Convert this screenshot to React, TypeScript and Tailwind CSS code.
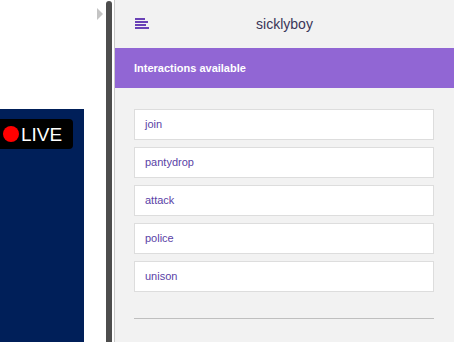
import React from "react";

const items = ["join", "pantydrop", "attack", "police", "unison"];

export default function App() {
  return (
    <div className="flex h-[342px] w-[454px] overflow-hidden bg-white" style={{ fontFamily: '"Liberation Sans", Arial, sans-serif' }}>
      {/* stream side */}
      <div className="relative w-[106px] shrink-0">
        <div className="absolute left-[97px] top-[8px] h-0 w-0 border-y-[6px] border-l-[6px] border-y-transparent border-l-[#c4c4c4]" />
        <div className="mt-[109px] h-[233px] w-[84px] bg-[#001f59] pt-[10px]">
          <div className="flex h-[30px] w-[73px] items-center rounded-r-[4px] bg-black pl-[3px]">
            <span className="h-[16px] w-[16px] rounded-full bg-[#ff0000]" />
            <span className="ml-[2px] text-[19px] leading-none text-white">LIVE</span>
          </div>
        </div>
      </div>

      {/* scrollbar */}
      <div className="mt-[1px] w-[6px] shrink-0 rounded-t-[3px] bg-[#4d4d4d]" />
      <div className="w-[2px] shrink-0 bg-white" />
      <div className="w-[1px] shrink-0 bg-[#c8c8c8]" />

      {/* chat panel */}
      <div className="flex flex-1 flex-col bg-[#f2f2f2]">
        <div className="relative flex h-[48px] items-center justify-center">
          <div className="absolute left-[20px] top-[18px] flex flex-col gap-[1px]">
            <span className="h-[2px] w-[10px] bg-[#6a42b6]" />
            <span className="h-[2px] w-[13px] bg-[#6a42b6]" />
            <span className="h-[2px] w-[11px] bg-[#6a42b6]" />
            <span className="h-[2px] w-[14px] bg-[#6a42b6]" />
          </div>
          <span className="text-[14px] text-[#3a3558]">sicklyboy</span>
        </div>
        <div className="flex h-[40px] items-center bg-[#9166d4] px-[19px]">
          <span className="text-[11px] font-bold text-white">Interactions available</span>
        </div>
        <div className="flex flex-col gap-[7px] pl-[19px] pr-[20px] pt-[21px]">
          {items.map((it) => (
            <div key={it} className="flex h-[31px] items-center border border-[#dddddd] bg-white px-[10px]">
              <span className="text-[11px] text-[#5a3fa6]">{it}</span>
            </div>
          ))}
        </div>
        <div className="ml-[19px] mr-[20px] mt-[26px] h-[1px] bg-[#bfbfbf]" />
      </div>
    </div>
  );
}
